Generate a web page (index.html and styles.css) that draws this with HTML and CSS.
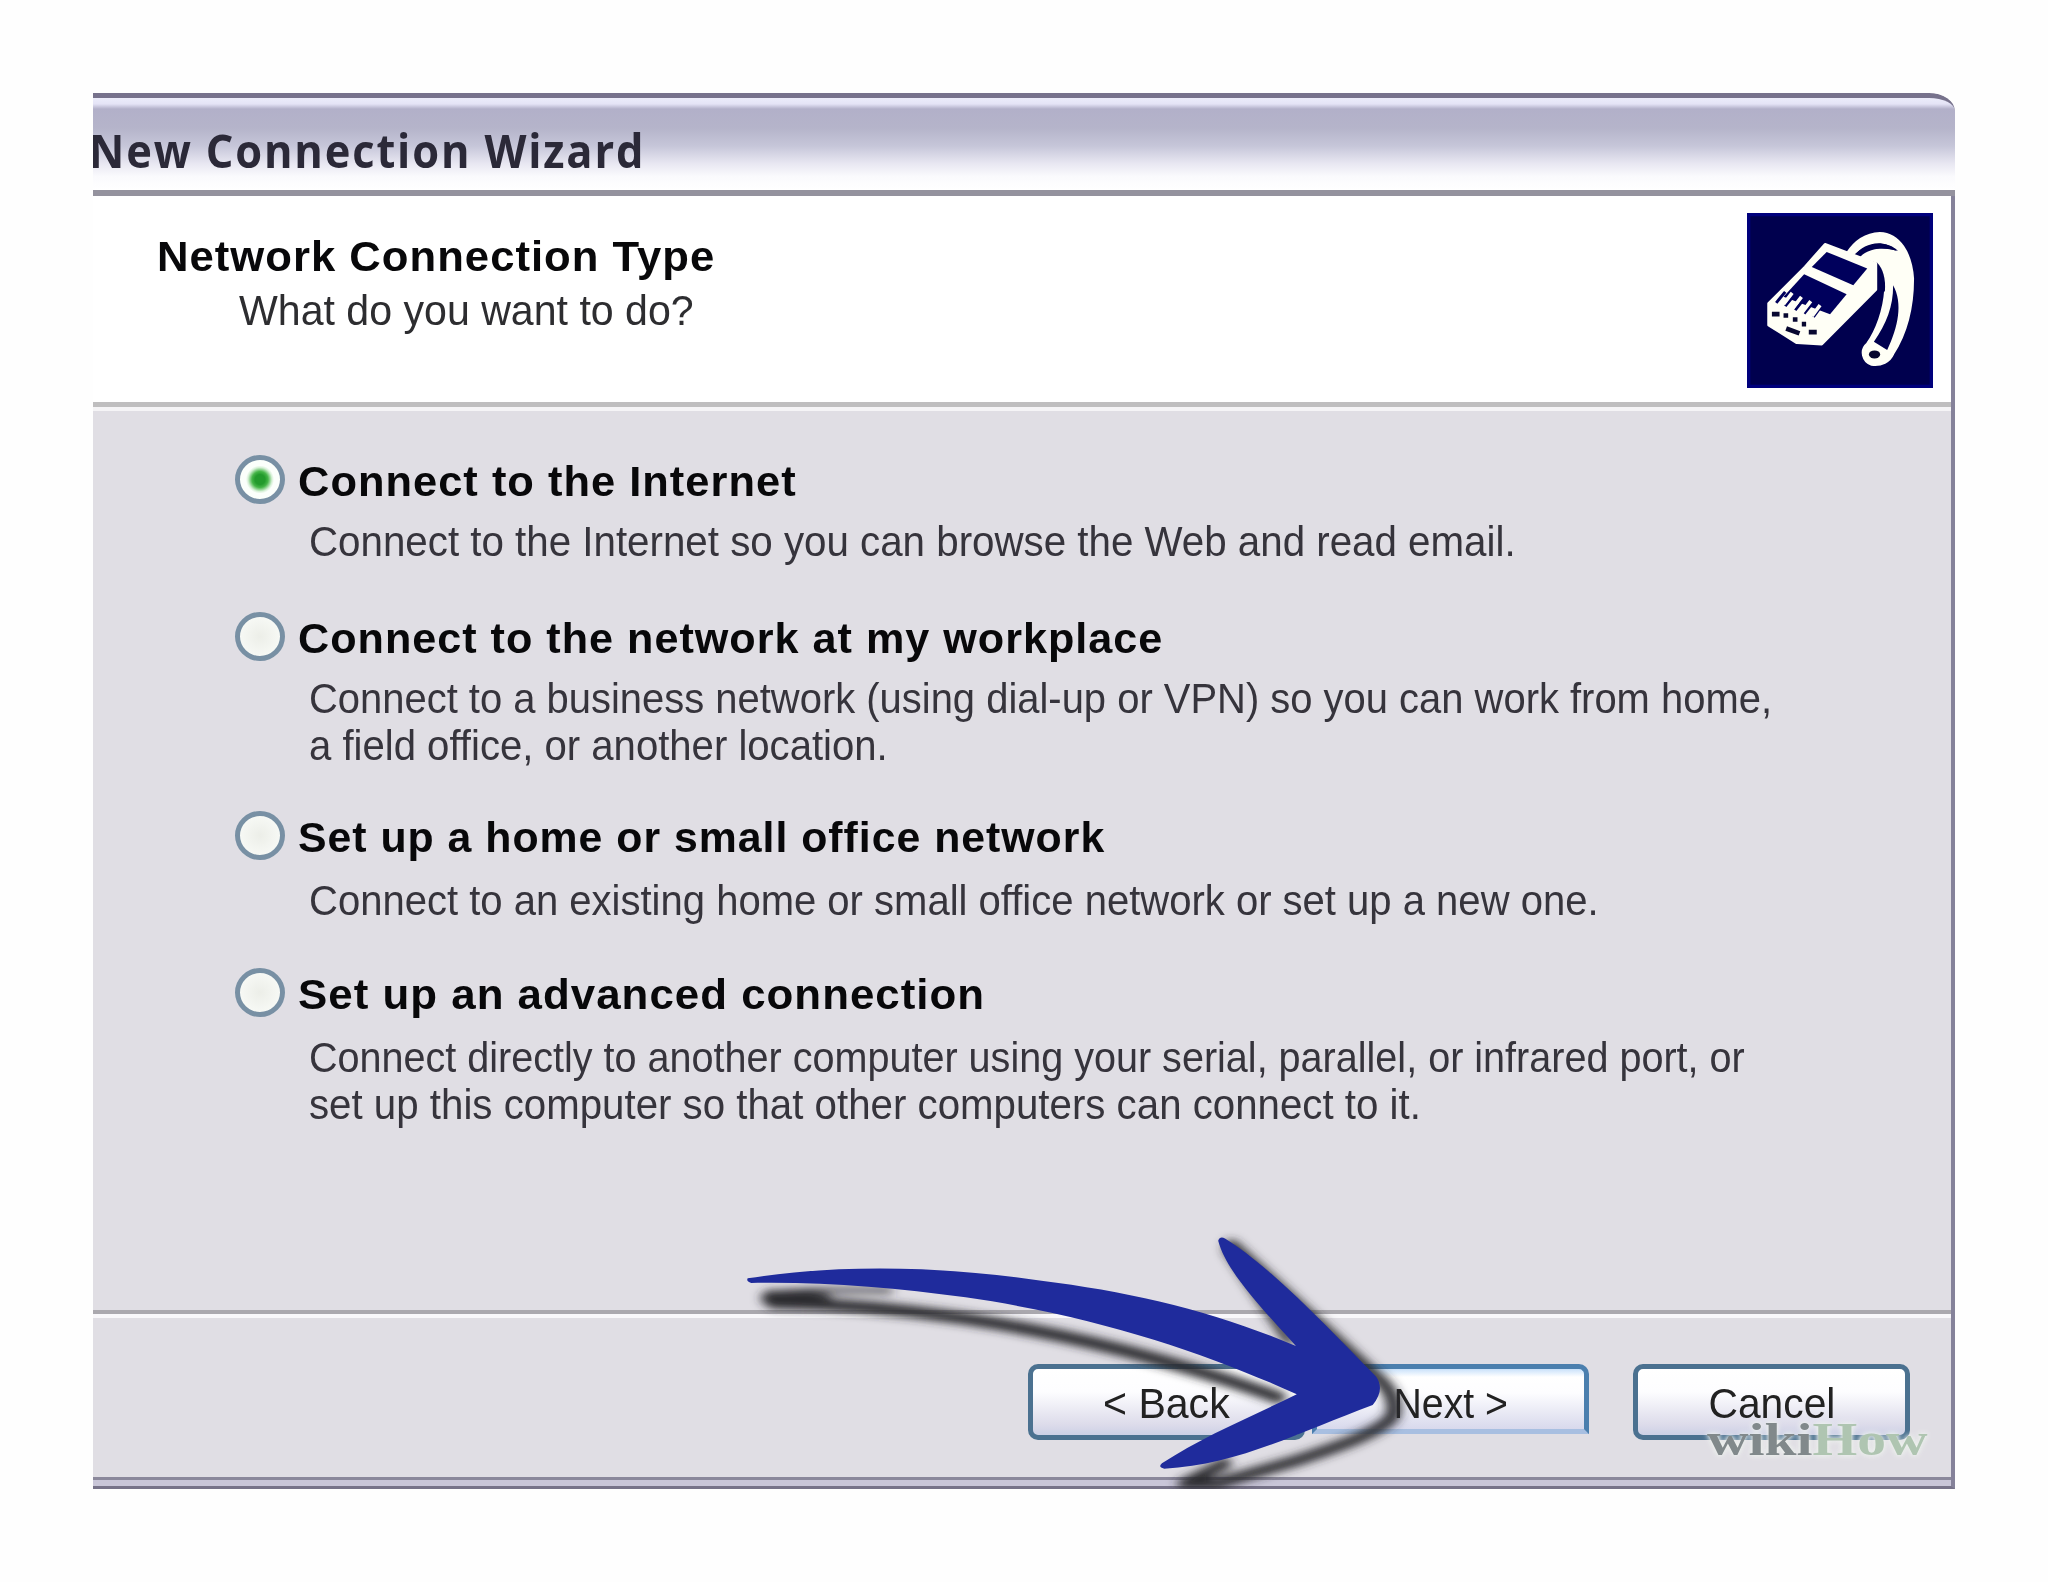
FILE: index.html
```
<!DOCTYPE html>
<html lang="en">
<head>
  <meta charset="UTF-8">
  <meta name="viewport" content="width=device-width, initial-scale=1.0">
  <title>New Connection Wizard</title>
  <link rel="stylesheet" href="styles.css">
</head>
<body>

  <div class="window">
    <div class="title-bar">
      <span class="fit" data-width="556">New Connection Wizard</span>
    </div>

    <div class="window-body">
      <div class="header">
        <div class="header-text">
          <h1><span class="fit" data-width="558">Network Connection Type</span></h1>
          <p><span class="fit" data-width="455">What do you want to do?</span></p>
        </div>
        <svg class="header-icon" viewBox="50 38 560 526" preserveAspectRatio="none">
          <rect x="50" y="38" width="560" height="526" fill="#00007c"/>
          <rect x="60" y="48" width="540" height="506" fill="#00004e"/>
          <path d="M350 160C375 120 410 100 450 98C510 100 545 160 550 235C550 330 530 400 490 462C480 485 455 498 425 494C398 485 388 450 412 430C440 390 462 330 466 270C466 225 450 195 430 180L385 172C410 145 460 140 515 158C485 122 425 110 365 166Z" fill="#fffff6" stroke="#fffff6" stroke-width="6"/>
          <path d="M375 165C400 130 460 112 500 152C460 138 415 145 390 170Z" fill="#00004e"/>
          <path d="M490 255C520 310 505 380 472 450L432 425C470 370 490 320 490 255Z" fill="#00004e"/>
          <path d="M440 185Q470 215 465 275L445 262Z" fill="#00004e"/>
          <path d="M285 132L438 190V268L275 432L200 428L115 375V310L225 200Z" fill="#fffff6" stroke="#fffff6" stroke-width="8" stroke-linejoin="round"/>
          <path d="M290 155L412 205L370 255L245 200Z" fill="#00005c"/>
          <path d="M222 222L350 282L300 342L160 290Z" fill="#00005c"/>
          <path d="M165 275L138 308M192 285L165 318M220 298L195 330M246 310L222 340M272 320L250 350" stroke="#00005c" stroke-width="9"/>
          <path d="M186 278L160 312M214 290L188 324M242 303L216 337M270 315L246 347" stroke="#fffff6" stroke-width="11"/>
          <path d="M125 342H148M160 346H174M188 358H202M215 372H228M236 396H260M168 385L208 400" stroke="#080830" stroke-width="14"/>
          <ellipse cx="434" cy="463" rx="17" ry="12" fill="#080830"/>
        </svg>
      </div>

      <div class="options">
        <div class="option">
          <span class="radio checked"></span>
          <div class="option-text">
            <h2><span class="fit" data-width="499">Connect to the Internet</span></h2>
            <p><span class="fit" data-width="1207">Connect to the Internet so you can browse the Web and read email.</span></p>
          </div>
        </div>
        <div class="option">
          <span class="radio"></span>
          <div class="option-text">
            <h2><span class="fit" data-width="865">Connect to the network at my workplace</span></h2>
            <p>
              <span class="fit" data-width="1463">Connect to a business network (using dial-up or VPN) so you can work from home,</span>
              <span class="fit" data-width="579">a field office, or another location.</span>
            </p>
          </div>
        </div>
        <div class="option low">
          <span class="radio"></span>
          <div class="option-text">
            <h2><span class="fit" data-width="807">Set up a home or small office network</span></h2>
            <p><span class="fit" data-width="1290">Connect to an existing home or small office network or set up a new one.</span></p>
          </div>
        </div>
        <div class="option low">
          <span class="radio"></span>
          <div class="option-text">
            <h2><span class="fit" data-width="687">Set up an advanced connection</span></h2>
            <p>
              <span class="fit" data-width="1436">Connect directly to another computer using your serial, parallel, or infrared port, or</span>
              <span class="fit" data-width="1112">set up this computer so that other computers can connect to it.</span>
            </p>
          </div>
        </div>
      </div>

      <div class="footer">
        <button class="btn"><span class="fit" data-width="127">&lt; Back</span></button>
        <button class="btn btn-next"><span class="fit" data-width="114">Next &gt;</span></button>
        <button class="btn btn-cancel"><span class="fit" data-width="127">Cancel</span></button>
      </div>
    </div>

    <svg class="arrow" viewBox="0 0 1568 837" preserveAspectRatio="none">
      <defs>
        <filter id="soft" x="-10%" y="-10%" width="120%" height="120%">
          <feGaussianBlur stdDeviation="12"/>
        </filter>
      </defs>
      <g filter="url(#soft)" fill="none" stroke="#2a292e" stroke-linecap="round" stroke-linejoin="round">
        <path d="M110 250C200 240 290 238 380 242" stroke-width="14"/>
        <path d="M120 278C430 285 690 350 900 420C1060 475 1160 520 1250 562" stroke-width="36"/>
        <path d="M115 264L230 275" stroke-width="46"/>
        <path d="M1140 120L1275 392" stroke-width="24"/>
        <path d="M1145 105L1465 495Q1518 550 1508 615C1486 665 1380 712 1290 752L1110 822L1040 822L1130 760" stroke-width="32"/>
      </g>
      <path d="M62 205C250 165 480 165 720 212C920 245 1110 305 1290 408C1225 310 1135 190 1116 92Q1120 76 1132 86C1230 165 1370 365 1470 500Q1490 540 1462 585C1300 665 1160 765 995 776Q980 772 990 760C1080 680 1190 620 1292 553C1090 430 850 320 550 262C390 233 230 215 70 219Q58 214 62 205Z" fill="#1f2b9c"/>
    </svg>

    <div class="watermark"><span class="fit" data-width="220">wiki<b>How</b></span></div>
  </div>

  <script>
    // squeeze every line of text to the narrow dialog font's width
    document.querySelectorAll('.fit').forEach((line) => {
      const scale = line.dataset.width / line.offsetWidth;
      line.style.transform = `scaleX(${scale})`;
    });
  </script>

</body>
</html>
```
FILE: styles.css
```
body {
  margin: 0;
  padding: 93px;
  background-color: #fefefe;
  font-family: "Liberation Sans", Arial, sans-serif;
  font-size: 43px;
  line-height: 48px;
  color: #111;
}

h1, h2, p {
  margin: 0;
  font-size: 43px;
  line-height: 48px;
}

h1, h2 {
  letter-spacing: 1px;
  color: #08080a;
}

.fit {
  display: block;
  width: max-content;
  white-space: nowrap;
  transform-origin: left center;
}

.window {
  position: relative;
  width: 1862px;
  height: 1396px;
  box-sizing: border-box;
  display: flex;
  flex-direction: column;
  overflow: hidden;
  border-top-right-radius: 26px 18px;
  background-color: #e0dee4;
}

.title-bar {
  height: 103px;
  box-sizing: border-box;
  padding-top: 28px;
  border-top: 5px solid #77728c;
  border-bottom: 6px solid #94929e;
  border-top-right-radius: 26px 18px;
  background: linear-gradient(#ececfa 0, #e4e3f6 6px, #b2b0c9 11px, #b5b4ca 30px, #c6c6d9 48px, #e7e6f1 65px, #fafafd 78px, #fff 100%);
  font-family: "Open Sans", sans-serif;
  font-size: 47px;
  font-weight: bold;
  letter-spacing: 2px;
  line-height: 48px;
  color: #2b2938;
}

.title-bar .fit {
  margin-left: -4px;
}

.window-body {
  flex: 1;
  display: flex;
  flex-direction: column;
  border-right: 4px solid #85829a;
  border-bottom: 3px solid #777389;
}

.header {
  display: flex;
  justify-content: space-between;
  height: 206px;
  background-color: #fff;
}

.header-text {
  padding: 36px 0 0 64px;
}

.header-text p {
  padding: 6px 0 0 82px;
  color: #2d2d30;
}

.header-icon {
  width: 186px;
  height: 175px;
  margin: 17px 18px 0 0;
}

.options {
  height: 908px;
  box-sizing: border-box;
  padding: 50px 0 0 142px;
  border-top: 5px solid #bfbebf;
  box-shadow: inset 0 4px #f5f4f6;
}

.option {
  display: flex;
  gap: 13px;
  margin-bottom: 49px;
}

.option + .option {
  margin-bottom: 44px;
}

.option.low + .option.low,
.option.low {
  margin-bottom: 46px;
}

.radio {
  width: 50px;
  height: 49px;
  box-sizing: border-box;
  margin-top: -2px;
  border: 5px solid #7890a4;
  border-radius: 50%;
  background: radial-gradient(#eceee8, #fbfdfa);
}

.radio.checked {
  background: radial-gradient(circle, #229a2c 0 5px, #45b548 8px, #d6f0d6 12px, #fbfffb 14px);
}

.option-text p {
  padding: 13px 0 0 11px;
  line-height: 47px;
  color: #36343c;
}

.low .option-text p {
  padding-top: 16px;
}

.footer {
  flex: 1;
  display: flex;
  align-items: flex-start;
  padding: 50px 0 0 935px;
  border-top: 4px solid #aaa8ae;
  border-bottom: 6px solid #c9c6d8;
  box-shadow: inset 0 4px #f8f7fa, inset 0 -3px #8b889b;
}

.btn {
  width: 277px;
  height: 76px;
  box-sizing: border-box;
  display: flex;
  justify-content: center;
  padding: 10px 0 0;
  border: 5px solid #4b7190;
  border-radius: 10px;
  background: linear-gradient(#fff 0, #fdfdff 35%, #dcdbea 85%, #ccd0e5 100%);
  font: inherit;
  color: #222;
}

.btn .fit {
  transform-origin: center;
}

.btn-next {
  height: 70px;
  margin-left: 7px;
  border-color: #4b7fae;
  border-bottom-color: #a8bfe1;
  border-radius: 10px 10px 0 0;
  background: linear-gradient(#c9e1fa 0, #fff 8px, #fdfdff 40%, #d8d9ec 100%);
}

.btn-cancel {
  margin-left: 44px;
}

/* pointer laid over the footer buttons */
.arrow {
  position: absolute;
  left: 627px;
  top: 1117px;
  width: 700px;
  height: 279px;
}

.watermark {
  position: absolute;
  left: 1614px;
  top: 1323px;
  font-family: "Liberation Serif", serif;
  font-size: 46px;
  font-weight: bold;
  line-height: 48px;
  color: #81898b;
  text-shadow: 0 0 4px #eef2ee, 0 0 6px #eef2ee;
}

.watermark b {
  color: #afc5b1;
}
```
